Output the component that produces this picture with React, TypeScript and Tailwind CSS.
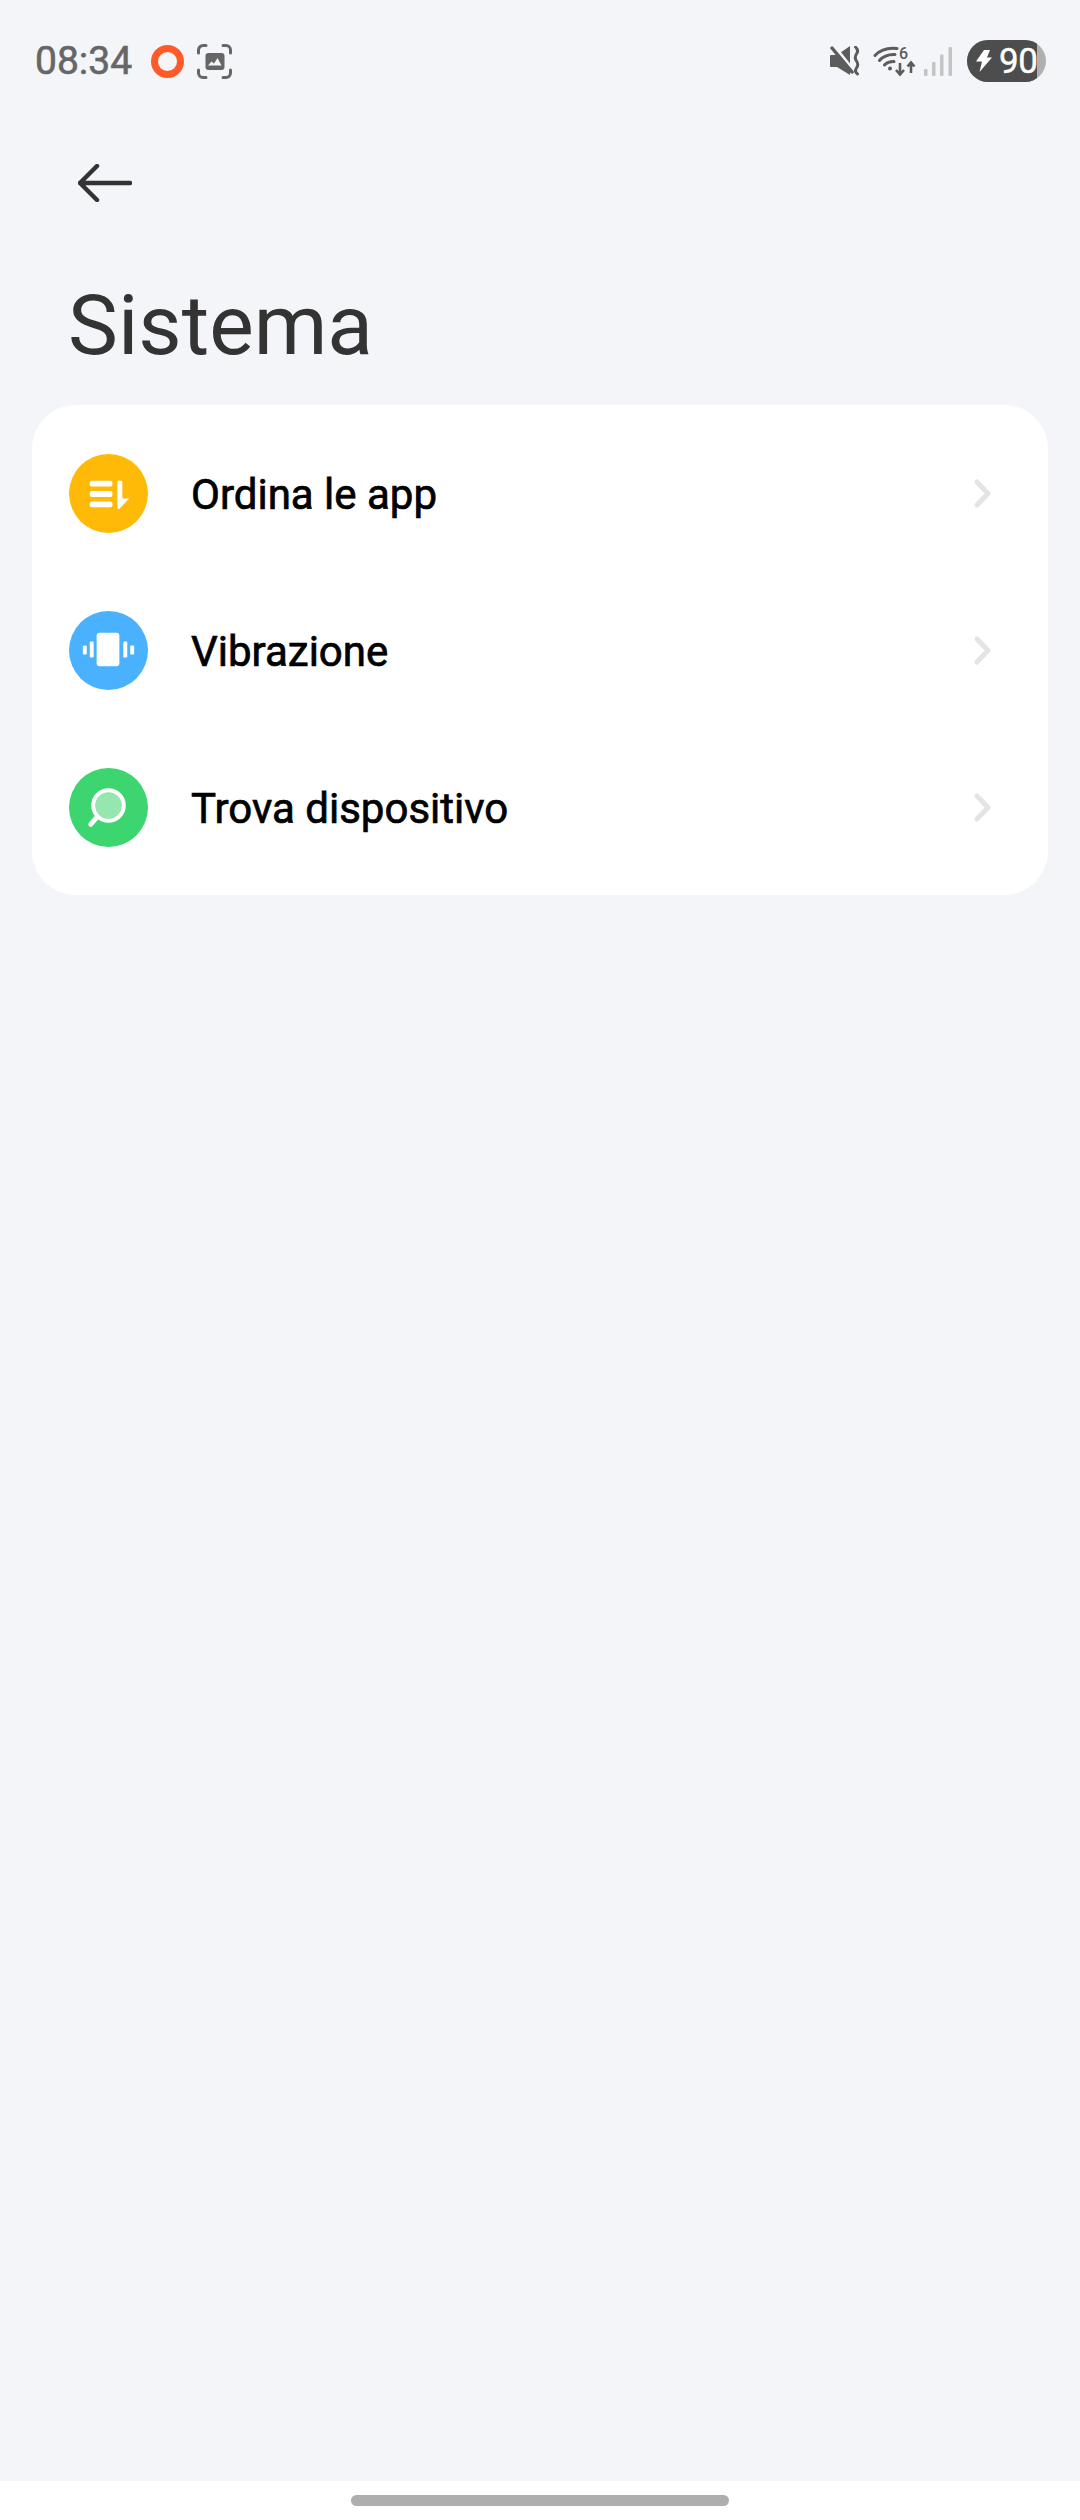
const rows = [
  { label: "Ordina le app", color: "bg-[#ffba08]", icon: <SortIcon /> },
  { label: "Vibrazione", color: "bg-[#4ab1ff]", icon: <VibrateIcon /> },
  { label: "Trova dispositivo", color: "bg-[#3dd56f]", icon: <FindIcon /> },
];

function SortIcon() {
  return (
    <svg viewBox="0 0 80 80" className="w-full h-full" fill="#fff">
      <rect x="21" y="27" width="23" height="6" rx="2" />
      <rect x="21" y="37.5" width="23" height="6" rx="2" />
      <rect x="21" y="48" width="23" height="6" rx="2" />
      <path d="M49 28a1 1 0 0 1 1-1h3a1 1 0 0 1 1 1v17h7L51 55.5c-1 .8-2 .2-2-1z" />
    </svg>
  );
}

function VibrateIcon() {
  return (
    <svg viewBox="0 0 80 80" className="w-full h-full" fill="#fff">
      <rect x="28" y="22" width="23" height="34" rx="3" />
      <rect x="21" y="31" width="4" height="16" rx="1" />
      <rect x="14" y="35" width="4" height="9" rx="1" />
      <rect x="55" y="31" width="4" height="16" rx="1" />
      <rect x="62" y="35" width="4" height="9" rx="1" />
    </svg>
  );
}

function FindIcon() {
  return (
    <svg viewBox="0 0 80 80" className="w-full h-full">
      <circle cx="40" cy="38" r="15.5" fill="#96e6b0" stroke="#fff" strokeWidth="4" />
      <path d="M28.5 49.5L22 57" stroke="#fff" strokeWidth="5" strokeLinecap="round" />
    </svg>
  );
}

function Chevron() {
  return (
    <svg viewBox="0 0 17 29" className="w-[17px] h-[29px]" fill="none">
      <path d="M3 3l11 11.5L3 26" stroke="#e4e4e4" strokeWidth="5" strokeLinecap="round" strokeLinejoin="round" />
    </svg>
  );
}

function ScreenshotIcon() {
  return (
    <svg viewBox="0 0 35 35" className="w-[35px] h-[35px]" fill="none">
      <path
        d="M1.500 9V6a4.500 4.500 0 0 1 4.500-4.500h3M26 1.500h3A4.500 4.500 0 0 1 33.500 6v3M33.500 26v3a4.500 4.500 0 0 1-4.500 4.500h-3M9 33.500H6A4.500 4.500 0 0 1 1.500 29v-3"
        stroke="#666"
        strokeWidth="3"
        strokeLinecap="round"
      />
      <rect x="8.500" y="9" width="19" height="17" rx="3" fill="#666" />
      <path d="M11 21.500l3.500-4 2.500 2 3.500-5.500 4 7.500z" fill="#f4f5f9" />
    </svg>
  );
}

function MuteIcon() {
  return (
    <svg viewBox="0 0 30 30" className="w-[30px] h-[30px]" fill="none">
      <path d="M1 9h6L20 0v29L7 21H1a1 1 0 0 1-1-1V10a1 1 0 0 1 1-1z" fill="#5c5c5c" />
      <path d="M5 1l19 24" stroke="#f4f5f9" strokeWidth="3" />
      <path d="M2 2l20 24" stroke="#5c5c5c" strokeWidth="3.500" strokeLinecap="round" />
      <path d="M25.500 1q3.500 3.500 1 7t0 7t0 7t1 6" stroke="#5c5c5c" strokeWidth="3" strokeLinecap="round" />
    </svg>
  );
}

function WifiIcon() {
  return (
    <svg viewBox="0 0 41 30" className="w-[41px] h-[30px] overflow-visible" fill="none">
      <path d="M1 9.500Q9 1 23 2.500" stroke="#5c5c5c" strokeWidth="3" strokeLinecap="round" />
      <path d="M5.500 14.500Q11 8 21 8.500" stroke="#5c5c5c" strokeWidth="3" strokeLinecap="round" />
      <path d="M10.500 19Q13.500 15.500 20 15.500" stroke="#5c5c5c" strokeWidth="3" strokeLinecap="round" />
      <circle cx="16" cy="22.500" r="2" fill="#5c5c5c" />
      <text x="25" y="13" fontSize="16" fontWeight="500" fill="#5c5c5c" fontFamily="Roboto, sans-serif">6</text>
      <path d="M26 17v11M22 24l4 4.500 4-4.500" stroke="#5c5c5c" strokeWidth="2.600" />
      <path d="M37 27V17M33.500 20.500L37 16.500l3.500 4" stroke="#5c5c5c" strokeWidth="2.600" />
    </svg>
  );
}

function SignalIcon() {
  return (
    <svg viewBox="0 0 29 29" className="w-[29px] h-[29px]" fill="#c4c4c4">
      <rect x="0" y="22" width="3.500" height="7" rx="1" />
      <rect x="8" y="15" width="3.500" height="14" rx="1" />
      <rect x="16" y="7.500" width="3.500" height="21.500" rx="1" />
      <rect x="24.500" y="0" width="3.500" height="29" rx="1" />
    </svg>
  );
}

function Battery() {
  return (
    <div className="w-[79px] h-[42px] rounded-full overflow-hidden bg-[#b0b0b0]">
      <div className="w-[70px] h-full bg-[#4d4d4d] flex items-center pl-[9px] gap-[7px]">
        <svg viewBox="0 0 16 22" className="w-4 h-[22px] shrink-0" fill="#fff">
          <path d="M8 0h6l-3 7.500h5L3.500 22 6 11.500H0z" />
        </svg>
        <span className="text-[35px] leading-none text-white tracking-[-0.5px] [-webkit-text-stroke:0.4px_#fff]">90</span>
      </div>
    </div>
  );
}

export default function App() {
  return (
    <div className="w-[1080px] h-[2520px] flex flex-col bg-[#f4f5f9] font-['Roboto',sans-serif] overflow-hidden">
      <div className="h-[122px] flex items-center justify-between pl-[35px] pr-[34px]">
        <div className="flex items-center">
          <span className="text-[39px] leading-none text-[#666] w-[116px] [-webkit-text-stroke:0.6px_#666]">08:34</span>
          <div className="w-[33px] h-[33px] rounded-full border-[7px] border-[#ff5a28]" />
          <div className="ml-[13px]">
            <ScreenshotIcon />
          </div>
        </div>
        <div className="flex items-center">
          <MuteIcon />
          <div className="ml-[14px]">
            <WifiIcon />
          </div>
          <div className="ml-[9px]">
            <SignalIcon />
          </div>
          <div className="ml-[14px]">
            <Battery />
          </div>
        </div>
      </div>

      <div className="h-[122px] flex items-center pl-[78px]">
        <svg viewBox="0 0 54 38" className="w-[54px] h-[38px]" fill="none">
          <path d="M2 19h50M19 2L2 19l17 17" stroke="#333" strokeWidth="4.500" strokeLinecap="round" strokeLinejoin="round" />
        </svg>
      </div>

      <div className="h-[161px] flex items-center pl-[68px] pt-[2px]">
        <h1 className="text-[84px] leading-none font-normal text-[#333]">Sistema</h1>
      </div>

      <div className="mx-8 bg-white rounded-[44px] pt-[10px] pb-[9px]">
        {rows.map((row) => (
          <div key={row.label} className="h-[157px] flex items-center pl-[37px] pr-[57px]">
            <div className={`w-[79px] h-[79px] rounded-full ${row.color}`}>{row.icon}</div>
            <span className="flex-1 ml-[43px] pt-[2px] text-[42px] leading-none text-black [-webkit-text-stroke:0.7px_#000]">{row.label}</span>
            <Chevron />
          </div>
        ))}
      </div>

      <div className="flex-1" />

      <div className="h-[39px] bg-white flex items-center justify-center">
        <div className="w-[378px] h-[11px] rounded-full bg-[#aeaeae]" />
      </div>
    </div>
  );
}
